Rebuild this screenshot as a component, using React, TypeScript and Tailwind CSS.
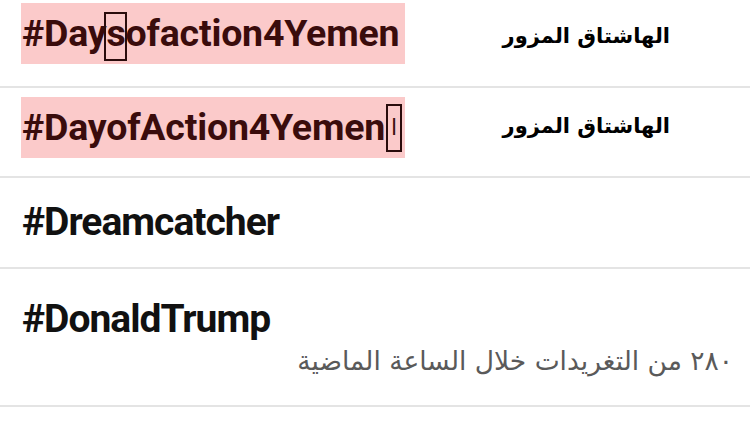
import React from 'react';

const latin = { fontFamily: 'Roboto, "Liberation Sans", sans-serif' };
const arabic = { fontFamily: '"DejaVu Sans", "Noto Sans", sans-serif' };

function FakeLabel() {
  return (
    <div dir="rtl" className="whitespace-nowrap text-[21px] font-bold text-black leading-none" style={arabic}>
      الهاشتاق المزور
    </div>
  );
}

export default function App() {
  return (
    <main className="w-[750px] h-[430px] bg-white overflow-hidden">
      {/* Row 1 - fake hashtag */}
      <section className="h-[88px] border-b-2 border-[#e4e4e4] flex items-start pl-[21px] pr-[80px] justify-between">
        <div className="mt-[3px] w-[384px] h-[61px] bg-[#fbcaca] flex items-center pl-[1px]">
          <span className="text-[37.5px] font-bold text-[#3a0c0c] leading-none tracking-[-0.2px]" style={latin}>
            #Day
            <span className="relative">
              s
              <span className="absolute left-[-2px] right-[-1px] top-[1px] bottom-[-6px] border-2 border-[#2a0c0c]" />
            </span>
            ofaction4Yemen
          </span>
        </div>
        <div className="mt-[26px]">
          <FakeLabel />
        </div>
      </section>

      {/* Row 2 - fake hashtag */}
      <section className="h-[90px] border-b-2 border-[#e4e4e4] flex items-start pl-[21px] pr-[80px] justify-between">
        <div className="mt-[9px] w-[384px] h-[61px] bg-[#fbcaca] flex items-center pl-[1px]">
          <span className="text-[37.5px] font-bold text-[#3a0c0c] leading-none tracking-[-0.2px]" style={latin}>
            #DayofAction4Yemen
          </span>
          <span className="relative ml-[1px] w-[16px] h-[48px] border-2 border-[#2a0c0c] flex items-center justify-center">
            <span className="text-[22px] text-[#3a0c0c] leading-none" style={arabic}>ا</span>
          </span>
        </div>
        <div className="mt-[28px]">
          <FakeLabel />
        </div>
      </section>

      {/* Row 3 */}
      <section className="h-[91px] border-b-2 border-[#e4e4e4] flex items-center pl-[22px]">
        <span className="text-[39px] font-bold text-[#111] leading-none tracking-[-1px]" style={latin}>
          #Dreamcatcher
        </span>
      </section>

      {/* Row 4 */}
      <section className="h-[138px] border-b-2 border-[#e4e4e4] flex flex-col pl-[22px] pr-[17px] pt-[31px]">
        <span className="text-[39px] font-bold text-[#111] leading-none tracking-[-1px]" style={latin}>
          #DonaldTrump
        </span>
        <div dir="rtl" className="mt-[9px] text-[26.5px] text-[#5a5a5a] leading-none" style={arabic}>
          ٢٨٠ من التغريدات خلال الساعة الماضية
        </div>
      </section>
    </main>
  );
}
